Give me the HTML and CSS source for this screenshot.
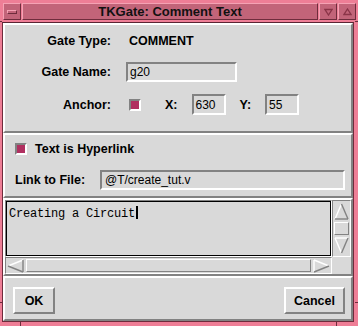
FILE: index.html
```html
<!doctype html>
<html lang="en">
  <head>
    <meta charset="UTF-8" />
    <meta name="viewport" content="width=device-width, initial-scale=1.0" />
    <title>TKGate: Comment Text</title>
    <link rel="stylesheet" href="styles.css">
  </head>
  <body>
    <div class="window">
      <!-- frame corner marks -->
      <span class="notch notch-h notch-left notch-top"></span>
      <span class="notch notch-h notch-left notch-bottom"></span>
      <span class="notch notch-h notch-right notch-top"></span>
      <span class="notch notch-h notch-right notch-bottom"></span>
      <span class="notch notch-v notch-foot-left"></span>
      <span class="notch notch-v notch-foot-right"></span>

      <div class="titlebar">
        <div class="tb-btn"><span class="tb-bar"></span></div>
        <div class="title">TKGate: Comment Text</div>
        <div class="tb-btn">
          <svg width="9" height="8" viewBox="0 0 9 8"><polygon points="1,1.5 8,1.5 4.5,7" fill="none" stroke="#8a3448" stroke-width="1.3"/></svg>
        </div>
        <div class="tb-btn">
          <svg width="9" height="8" viewBox="0 0 9 8"><polygon points="4.5,1 8,6.5 1,6.5" fill="none" stroke="#8a3448" stroke-width="1.3"/></svg>
        </div>
      </div>

      <div class="client">
        <!-- gate properties -->
        <div class="panel props">
          <div class="row">
            <span class="label">Gate Type:</span>
            <span class="value">COMMENT</span>
          </div>
          <div class="row">
            <span class="label">Gate Name:</span>
            <span class="entry name-entry">g20</span>
          </div>
          <div class="row anchor-row">
            <span class="label">Anchor:</span>
            <span class="check"></span>
            <span class="coord-label">X:</span>
            <span class="entry small-entry">630</span>
            <span class="coord-label">Y:</span>
            <span class="entry small-entry">55</span>
          </div>
        </div>

        <!-- hyperlink -->
        <div class="panel link">
          <div class="check-row">
            <span class="check"></span>
            <span class="check-text">Text is Hyperlink</span>
          </div>
          <div class="file-row">
            <span class="file-label">Link to File:</span>
            <span class="entry file-entry">@T/create_tut.v</span>
          </div>
        </div>

        <!-- comment text -->
        <div class="panel text-panel">
          <div class="textbox">
            <div class="textbox-inner">Creating a Circuit<span class="cursor"></span></div>
          </div>
          <div class="vscroll">
            <svg class="arrow" width="15" height="17" viewBox="0 0 15 17">
              <line x1="7.5" y1="1" x2="1" y2="16" stroke="#fff" stroke-width="1.4"/>
              <line x1="7.5" y1="1" x2="14" y2="16" stroke="#828282" stroke-width="1.4"/>
              <line x1="1" y1="16" x2="14" y2="16" stroke="#828282" stroke-width="1.4"/>
            </svg>
            <div class="slider"></div>
            <svg class="arrow" width="15" height="17" viewBox="0 0 15 17">
              <line x1="1" y1="1" x2="14" y2="1" stroke="#fff" stroke-width="1.4"/>
              <line x1="1" y1="1" x2="7.5" y2="16" stroke="#fff" stroke-width="1.4"/>
              <line x1="14" y1="1" x2="7.5" y2="16" stroke="#828282" stroke-width="1.4"/>
            </svg>
          </div>
          <div class="hscroll">
            <svg class="arrow" width="17" height="14" viewBox="0 0 17 14">
              <line x1="1" y1="7" x2="16" y2="1" stroke="#fff" stroke-width="1.4"/>
              <line x1="1" y1="7" x2="16" y2="13" stroke="#828282" stroke-width="1.4"/>
              <line x1="16" y1="1" x2="16" y2="13" stroke="#828282" stroke-width="1.4"/>
            </svg>
            <div class="slider"></div>
            <svg class="arrow" width="17" height="14" viewBox="0 0 17 14">
              <line x1="1" y1="1" x2="1" y2="13" stroke="#fff" stroke-width="1.4"/>
              <line x1="1" y1="1" x2="16" y2="7" stroke="#fff" stroke-width="1.4"/>
              <line x1="1" y1="13" x2="16" y2="7" stroke="#828282" stroke-width="1.4"/>
            </svg>
          </div>
          <div class="corner"></div>
        </div>

        <!-- dialog buttons -->
        <div class="panel buttons">
          <button class="btn ok-btn">OK</button>
          <button class="btn cancel-btn">Cancel</button>
        </div>
      </div>
    </div>
  </body>
</html>
```

FILE: styles.css
```css
* {
  box-sizing: border-box;
}

body {
  margin: 0;
  width: 358px;
  height: 326px;
  overflow: hidden;
  font-family: "Liberation Sans", Arial, Helvetica, sans-serif;
  font-size: 12px;
  color: #000;
}

.window {
  position: relative;
  width: 358px;
  height: 326px;
  background: #ee7e96;
  display: flex;
  flex-direction: column;
  padding: 0 4px 4px 2px;
}

/* frame corner marks */
.notch {
  position: absolute;
  background: #6e2c3c;
}

.notch-h {
  height: 1px;
  width: 3px;
}

.notch-v {
  width: 1px;
  height: 4px;
  bottom: 0;
}

.notch-left { left: 0; width: 2px; }
.notch-right { right: 0; }
.notch-top { top: 21px; }
.notch-bottom { top: 302px; }
.notch-foot-left { left: 20px; }
.notch-foot-right { left: 336px; }

/* title bar */
.titlebar {
  height: 22px;
  display: flex;
  gap: 1px;
  padding: 3px 0 2px 1px;
  margin-right: -2px;
}

.tb-btn,
.title {
  height: 17px;
  background: #c26479;
  border: 1px solid;
  border-color: #f5a2b4 #6e2c3c #6e2c3c #f5a2b4;
  display: flex;
  align-items: center;
  justify-content: center;
}

.tb-btn {
  width: 18px;
}

.tb-bar {
  width: 10px;
  height: 4px;
  border: 1px solid;
  border-color: #f5a2b4 #6e2c3c #6e2c3c #f5a2b4;
}

.title {
  flex: 1;
  font-size: 13px;
  font-weight: bold;
  color: #111;
}

/* client area */
.client {
  flex: 1;
  display: flex;
  flex-direction: column;
  background: #d9d9d9;
  border: 1px solid #6e2c3c;
  border-top-color: #5a2432;
}

.panel {
  border: 2px solid;
  border-color: #fff #828282 #828282 #fff;
}

.entry {
  display: flex;
  align-items: center;
  height: 20px;
  padding-left: 2px;
  border: 2px solid;
  border-color: #828282 #fff #fff #828282;
  background: #d9d9d9;
  font-size: 12px;
}

.check {
  flex: none;
  width: 12px;
  height: 12px;
  border: 2px solid;
  border-color: #828282 #fff #fff #828282;
  background: #b03060;
}

/* properties */
.props {
  height: 110px;
  padding-top: 6px;
}

.row {
  height: 20px;
  display: flex;
  align-items: center;
}

.row + .row {
  margin-top: 11px;
}

.anchor-row {
  height: 21px;
}

.row.anchor-row {
  margin-top: 12px;
}

.label {
  width: 106px;
  text-align: right;
  font-size: 12.5px;
  font-weight: bold;
  margin-right: 15px;
}

.value {
  font-size: 12.5px;
  font-weight: bold;
  padding-left: 3px;
}

.name-entry {
  width: 111px;
}

.anchor-row .check {
  margin-left: 3px;
}

.coord-label {
  font-size: 12.5px;
  font-weight: bold;
  margin-left: 24px;
  margin-right: 14px;
}

.coord-label + .entry + .coord-label {
  margin-left: 14px;
}

.small-entry {
  width: 34px;
  height: 21px;
}

/* hyperlink */
.link {
  height: 65px;
  padding: 8px 6px 6px 10px;
}

.check-row {
  display: flex;
  align-items: center;
  height: 12px;
  gap: 8px;
}

.check-text,
.file-label {
  font-size: 12.5px;
  font-weight: bold;
}

.file-row {
  display: flex;
  align-items: center;
  margin-top: 15px;
}

.file-label {
  width: 85px;
}

.file-entry {
  flex: 1;
  padding-left: 3px;
}

/* text widget */
.text-panel {
  height: 78px;
  display: grid;
  grid-template-columns: 1fr 19px;
  grid-template-rows: 57px 17px;
}

.textbox {
  border: 1px solid;
  border-color: #828282 #fff #fff #828282;
}

.textbox-inner {
  height: 100%;
  border: 1px solid #000;
  padding: 4px 2px;
  font-family: "Liberation Mono", "Courier New", monospace;
  font-size: 12px;
  letter-spacing: -0.2px;
  line-height: 14px;
  white-space: pre;
}

.cursor {
  display: inline-block;
  width: 2px;
  height: 13px;
  margin-left: 1px;
  background: #000;
  vertical-align: -2px;
}

.vscroll {
  display: flex;
  flex-direction: column;
  align-items: center;
  padding: 2px 1px;
  border: 1px solid;
  border-color: #828282 #fff #fff #828282;
}

.vscroll .slider {
  flex: 1;
  width: 15px;
  margin: 2px 0;
  border: 1px solid;
  border-color: #fff #828282 #828282 #fff;
}

.hscroll {
  display: flex;
  align-items: center;
  gap: 2px;
  padding: 0 1px;
  border: 1px solid;
  border-color: #828282 #fff #fff #828282;
}

.hscroll .slider {
  flex: 1;
  height: 13px;
  border: 1px solid;
  border-color: #fff #828282 #828282 #fff;
}

.arrow {
  display: block;
  flex: none;
}

/* buttons */
.buttons {
  flex: 1;
  display: flex;
  justify-content: space-between;
  align-items: flex-start;
  padding: 9px 6px 0 8px;
}

.btn {
  height: 27px;
  padding: 0;
  background: #d9d9d9;
  border: 2px solid;
  border-color: #fff #828282 #828282 #fff;
  font-family: "Liberation Sans", Arial, Helvetica, sans-serif;
  font-size: 12.5px;
  font-weight: bold;
  color: #000;
}

.ok-btn {
  width: 42px;
}

.cancel-btn {
  width: 61px;
}
```
